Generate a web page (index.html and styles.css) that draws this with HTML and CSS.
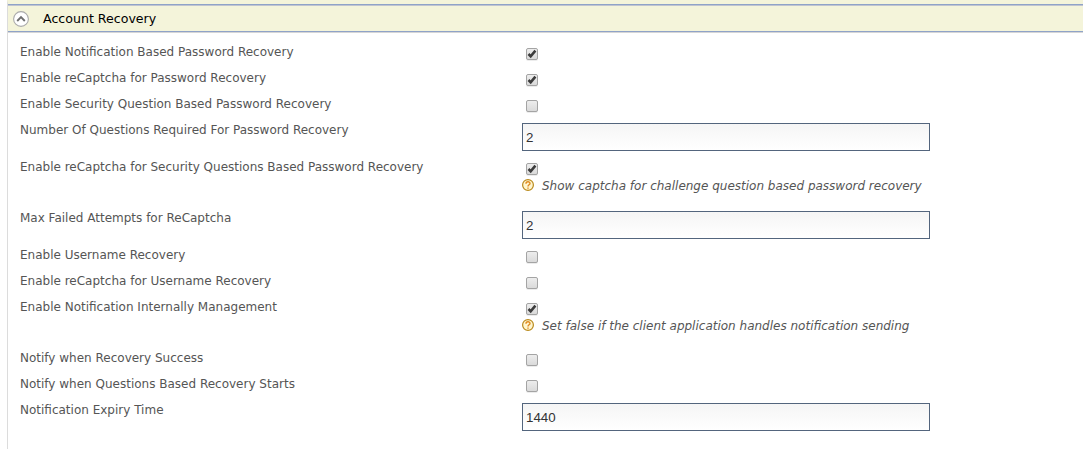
FILE: index.html
```
<!DOCTYPE html>
<html lang="en">
<head>
<meta charset="utf-8">
<title>Account Recovery</title>
<link rel="stylesheet" href="styles.css">
</head>
<body>
<svg class="defs" width="0" height="0">
  <defs>
    <linearGradient id="boxfill" x1="0" y1="0" x2="0" y2="1"><stop offset="0" stop-color="#eeeeee"/><stop offset="1" stop-color="#d9d9d9"/></linearGradient>
    <symbol id="off" viewBox="0 0 12 13"><rect y="1" width="12" height="12" rx="2" fill="#ececec"/><rect x=".5" y=".5" width="11" height="11" rx="1.5" fill="url(#boxfill)" stroke="#a4a4a4"/></symbol>
    <symbol id="on" viewBox="0 0 12 13"><use href="#off"/><path d="M2.5 6 4.7 8.3 9.4 2.7" fill="none" stroke="#3c3c3c" stroke-width="2.6"/></symbol>
    <symbol id="help" viewBox="0 0 12 12"><circle cx="6" cy="6" r="5.4" fill="#fff6cf" stroke="#b98a1c" stroke-width="1.2"/><path d="M4 4.7C4 2.1 8.1 2.2 8 4.6 7.9 5.8 6 5.8 6 7.5M6 8.4V9.8" fill="none" stroke="#e08a1e" stroke-width="1.4"/></symbol>
  </defs>
</svg>
<main class="panel">
  <header class="bar">
    <svg class="toggle" viewBox="0 0 16 16"><circle cx="8" cy="8" r="7.4" fill="#fff" stroke="#aaa" stroke-width="1.1"/><path d="M4.2 10 8 6.2 11.8 10" fill="none" stroke="#707070" stroke-width="1.9"/></svg>
    <h2 class="title">Account Recovery</h2>
  </header>
  <div class="rows">
    <div class="row"><span class="label">Enable Notification Based Password Recovery</span><svg class="check"><use href="#on"/></svg></div>
    <div class="row"><span class="label">Enable reCaptcha for Password Recovery</span><svg class="check"><use href="#on"/></svg></div>
    <div class="row"><span class="label">Enable Security Question Based Password Recovery</span><svg class="check"><use href="#off"/></svg></div>
    <div class="row field"><span class="label">Number Of Questions Required For Password Recovery</span><input class="input" value="2"></div>
    <div class="row hinted"><span class="label">Enable reCaptcha for Security Questions Based Password Recovery</span><div><svg class="check"><use href="#on"/></svg><p class="hint"><svg class="help"><use href="#help"/></svg><span>Show captcha for challenge question based password recovery</span></p></div></div>
    <div class="row field"><span class="label">Max Failed Attempts for ReCaptcha</span><input class="input" value="2"></div>
    <div class="row"><span class="label">Enable Username Recovery</span><svg class="check"><use href="#off"/></svg></div>
    <div class="row"><span class="label">Enable reCaptcha for Username Recovery</span><svg class="check"><use href="#off"/></svg></div>
    <div class="row hinted"><span class="label">Enable Notification Internally Management</span><div><svg class="check"><use href="#on"/></svg><p class="hint"><svg class="help"><use href="#help"/></svg><span>Set false if the client application handles notification sending</span></p></div></div>
    <div class="row"><span class="label">Notify when Recovery Success</span><svg class="check"><use href="#off"/></svg></div>
    <div class="row"><span class="label">Notify when Questions Based Recovery Starts</span><svg class="check"><use href="#off"/></svg></div>
    <div class="row field"><span class="label">Notification Expiry Time</span><input class="input" value="1440"></div>
  </div>
</main>
</body>
</html>
```
FILE: styles.css
```
* { box-sizing: border-box; }
body { margin: 0; background: #fff; font: 12px/16px "DejaVu Sans", sans-serif; color: #555; overflow: hidden; }
.defs { display: block; }
.panel { margin-left: 7px; height: 449px; border-left: 1px solid #dcdcdc; border-top: 4px solid #f4f4da; }
.bar { display: flex; align-items: center; gap: 14px; height: 29px; padding: 1px 0 0 5px; background: #f4f4da; border-top: 1px solid #8fa3c8; border-bottom: 1px solid #d6d6d6; box-shadow: inset 0 1px #c0c4d0, inset 0 -1px #8fa3c8; }
.toggle { width: 16px; height: 16px; }
.title { margin: 0; font-size: 12.6px; font-weight: normal; color: #000; }
.rows { padding: 8px 0 0 12px; }
.row { display: grid; grid-template-columns: 502px 408px; height: 26px; align-items: start; }
.field { height: 37px; }
.hinted { height: 51px; }
.label { padding-top: 3px; }
.check { display: block; width: 12px; height: 13px; margin: 7px 0 0 4px; }
.input { width: 408px; height: 28px; margin-top: 4px; padding: 3px 3px 2px; border: 1px solid #53657d; border-radius: 0; background: linear-gradient(#f5f5f5, #fff); font: 13.33px "Liberation Sans", sans-serif; color: #333; }
.hint { display: flex; align-items: center; gap: 8px; margin: 2px 0 0; font-style: italic; }
.help { width: 12px; height: 12px; margin-bottom: 2px; }
```
